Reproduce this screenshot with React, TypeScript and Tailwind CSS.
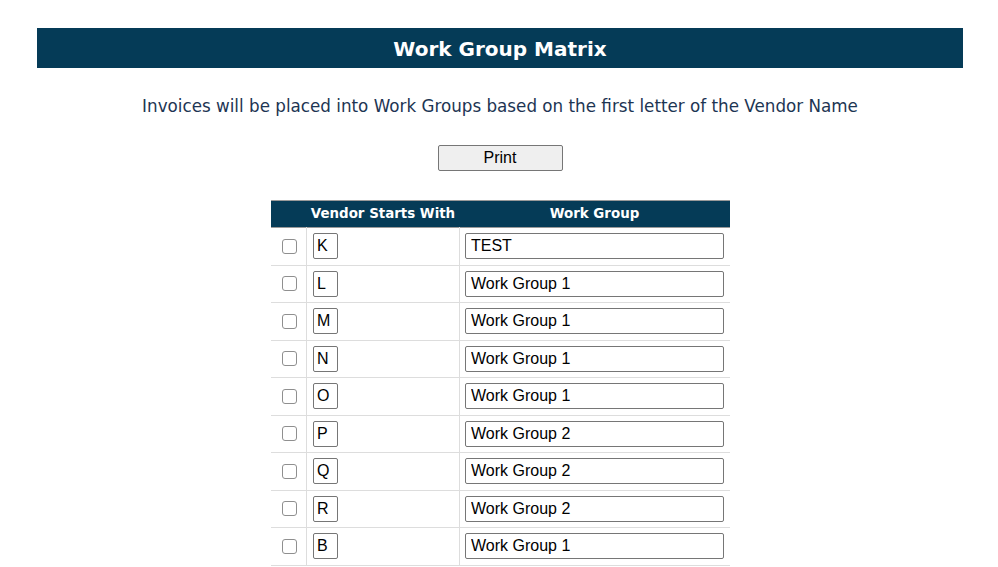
import React from 'react';

const rows = [
  { letter: 'K', group: 'TEST' },
  { letter: 'L', group: 'Work Group 1' },
  { letter: 'M', group: 'Work Group 1' },
  { letter: 'N', group: 'Work Group 1' },
  { letter: 'O', group: 'Work Group 1' },
  { letter: 'P', group: 'Work Group 2' },
  { letter: 'Q', group: 'Work Group 2' },
  { letter: 'R', group: 'Work Group 2' },
  { letter: 'B', group: 'Work Group 1' },
];

const verdana = { fontFamily: '"DejaVu Sans", Verdana, sans-serif' };

export default function App() {
  return (
    <div className="min-h-screen bg-white pt-[28px] pl-[2px]" style={verdana}>
      <div className="w-[926px] mx-auto h-[40px] bg-[#053b57] flex items-center justify-center">
        <h1 className="text-white font-bold text-[20px] leading-[24px] mt-[1px]">Work Group Matrix</h1>
      </div>

      <p className="mt-[28px] text-center text-[#1d3553] text-[16.75px] leading-[20px]">
        Invoices will be placed into Work Groups based on the first letter of the Vendor Name
      </p>

      <div className="flex justify-center mt-[29px]">
        <button className="w-[125px] h-[26px] bg-[#efefef] border border-[#767676] rounded-[2px] text-[16px] text-black font-['Liberation_Sans',Arial,sans-serif]">
          Print
        </button>
      </div>

      <table className="mx-auto mt-[29px] w-[459px] border-collapse">
        <thead>
          <tr className="bg-[#053b57] text-white h-[27px] border-t border-b border-[#9a9a9a]">
            <th className="w-[36px]"></th>
            <th className="w-[153px] text-[13.4px] font-bold text-center">Vendor Starts With</th>
            <th className="text-[13.4px] font-bold text-center">Work Group</th>
          </tr>
        </thead>
        <tbody>
          {rows.map((r, i) => (
            <tr key={i} className="h-[37.5px] border-b border-[#dddddd]">
              <td className="border-r border-[#dddddd] align-middle">
                <input
                  type="checkbox"
                  className="appearance-none block ml-[11px] w-[15px] h-[15px] border border-[#8f8f8f] rounded-[3px] bg-white"
                />
              </td>
              <td className="border-r border-[#dddddd] pl-[6px] align-middle">
                <input
                  readOnly
                  value={r.letter}
                  className="block w-[25px] h-[26px] border border-[#767676] rounded-[2px] px-[3px] text-[16px] text-black font-['Liberation_Sans',Arial,sans-serif]"
                />
              </td>
              <td className="pl-[5px] align-middle">
                <input
                  readOnly
                  value={r.group}
                  className="block w-[259px] h-[26px] border border-[#767676] rounded-[2px] px-[5px] text-[16px] text-black font-['Liberation_Sans',Arial,sans-serif]"
                />
              </td>
            </tr>
          ))}
        </tbody>
      </table>
    </div>
  );
}
